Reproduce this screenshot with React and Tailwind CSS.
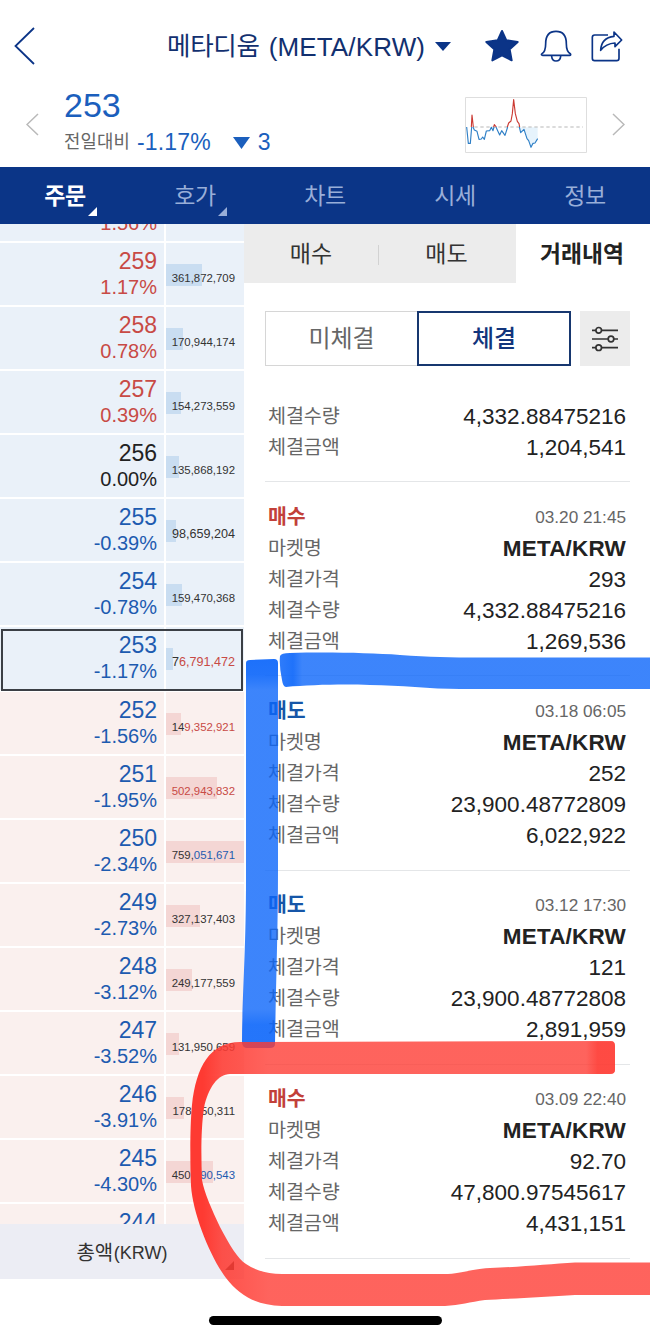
const orderBook = [
  { price: "", rate: "1.56%", dir: "up", side: "ask", amount: "", bar: 0 },
  { price: "259", rate: "1.17%", dir: "up", side: "ask", amount: "361,872,709", bar: 36 },
  { price: "258", rate: "0.78%", dir: "up", side: "ask", amount: "170,944,174", bar: 17 },
  { price: "257", rate: "0.39%", dir: "up", side: "ask", amount: "154,273,559", bar: 15 },
  { price: "256", rate: "0.00%", dir: "flat", side: "ask", amount: "135,868,192", bar: 13 },
  { price: "255", rate: "-0.39%", dir: "down", side: "ask", amount: "98,659,204", bar: 10 },
  { price: "254", rate: "-0.78%", dir: "down", side: "ask", amount: "159,470,368", bar: 16 },
  { price: "253", rate: "-1.17%", dir: "down", side: "ask", amount: "7", changed: "6,791,472", tone: "up", bar: 7, current: true },
  { price: "252", rate: "-1.56%", dir: "down", side: "bid", amount: "14", changed: "9,352,921", tone: "up", bar: 15 },
  { price: "251", rate: "-1.95%", dir: "down", side: "bid", amount: "", changed: "502,943,832", tone: "up", bar: 51 },
  { price: "250", rate: "-2.34%", dir: "down", side: "bid", amount: "759,", changed: "051,671", tone: "down", bar: 78 },
  { price: "249", rate: "-2.73%", dir: "down", side: "bid", amount: "327,137,403", bar: 34 },
  { price: "248", rate: "-3.12%", dir: "down", side: "bid", amount: "249,177,559", bar: 26 },
  { price: "247", rate: "-3.52%", dir: "down", side: "bid", amount: "131,950,659", bar: 13 },
  { price: "246", rate: "-3.91%", dir: "down", side: "bid", amount: "178,350,311", bar: 18 },
  { price: "245", rate: "-4.30%", dir: "down", side: "bid", amount: "450,3", changed: "90,543", tone: "down", bar: 47 },
  { price: "244", rate: "", dir: "down", side: "bid", amount: "", bar: 0 },
];

const trades = [
  { type: "매수", date: "03.20 21:45", price: "293", qty: "4,332.88475216", total: "1,269,536" },
  { type: "매도", date: "03.18 06:05", price: "252", qty: "23,900.48772809", total: "6,022,922" },
  { type: "매도", date: "03.12 17:30", price: "121", qty: "23,900.48772808", total: "2,891,959" },
  { type: "매수", date: "03.09 22:40", price: "92.70", qty: "47,800.97545617", total: "4,431,151" },
];

const toneClass = {
  up: "text-[#c84a45]",
  down: "text-[#1d5bb0]",
  flat: "text-[#222]",
};

function Header() {
  return (
    <header className="flex h-[92px] items-center pl-[14px] pr-[26px] text-[#0b3487]">
      <svg className="w-[22px] h-[40px]" viewBox="0 0 22 40" fill="none" stroke="currentColor" strokeWidth="1.8">
        <path d="M20 2 L1.5 20 L20 38" />
      </svg>
      <h1 className="ml-[131px] flex w-[259px] items-center whitespace-nowrap text-[26px] leading-[34px] text-[#12306f]">
        <span className="text-[25.5px] tracking-[-0.3px]">메타디움</span>
        <span className="ml-[9px] mt-px tracking-[0.15px]">(META/KRW)</span>
      </h1>
      <svg className="ml-[9px] w-[16px] h-[9px]" viewBox="0 0 16 9" fill="currentColor">
        <path d="M0 0H16L8 9Z" />
      </svg>
      <svg className="ml-[34px] w-[34px] h-[34px] shrink-0" viewBox="481 84 102 102" fill="currentColor" stroke="currentColor" strokeWidth="6" strokeLinejoin="round">
        <path d="M532 90 L545 118 L579 123 L555 145 L561 178 L532 163 L503 178 L509 145 L485 123 L519 118 Z" />
      </svg>
      <svg className="ml-[20px] w-[34px] h-[34px] shrink-0" viewBox="641 86 102 102" fill="none" stroke="currentColor" strokeWidth="5" strokeLinejoin="round" strokeLinecap="round">
        <path d="M661 130 C661 105 673 93 692 93 C711 93 723 105 723 130 C723 148 726 155 735 160 C737 163 736 165 733 165 H652 C648 165 647 162 650 160 C658 155 661 148 661 130Z" />
        <path d="M679 168 C680 178 686 182 692 182 C698 182 705 178 706 168" />
      </svg>
      <svg className="ml-[17px] w-[34px] h-[34px] shrink-0" viewBox="796 86 102 102" fill="none" stroke="currentColor" strokeWidth="5" strokeLinejoin="round">
        <path d="M850 104 H810 Q803 104 803 111 V174 Q803 181 810 181 H876 Q883 181 883 174 V145" />
        <path d="M868 95 L891 119 L871 139 V128 C850 129 838 137 828 150 C829 126 843 111 868 108 Z" />
      </svg>
    </header>
  );
}

function MiniChart() {
  return (
    <svg className="w-[122px] h-[56px]" viewBox="30 36 366 168" fill="none" strokeWidth="3.4" strokeLinejoin="round">
      <rect x="31.5" y="37.5" width="363" height="165" stroke="#dedede" strokeWidth="3" />
      <path d="M194 127 L200 143 L207 133 L228 187 L248 161 V127Z" fill="#e6f3fc" />
      <path d="M58 126 H384" stroke="#b8b8b8" strokeWidth="3.5" strokeDasharray="10 8" />
      <path
        d="M35 126 L40 175 H46 L50 126 M54 126 L58 135 L66 139 L72 163 L79 162 L83 156 L88 163 L94 138 L104 137 L109 127 L114 137 L117 126 M123 126 L128 137 L134 150 L140 137 L150 151 L158 126 M193 126 L197 143 L207 133 L216 161 L221 167 L228 187 L234 175 L240 174 L248 161"
        stroke="#2e7fc6"
      />
      <path d="M49 126 L51 90 L55 126 M116 126 L118 119 L124 126 M157 126 L161 114 L168 108 L172 86 L176 44 L181 86 L187 109 L192 116 L194 126" stroke="#cb3a33" />
    </svg>
  );
}

function Ticker() {
  return (
    <section className="flex h-[75px] items-start">
      <svg className="ml-[26px] mt-[21px] w-[13px] h-[23px]" viewBox="0 0 13 23" fill="none" stroke="#b9b9b9" strokeWidth="1.5">
        <path d="M12 1 L1 11.5 L12 22" />
      </svg>
      <div className="ml-[25px] w-[401px] text-[#1b5fbd]">
        <div className="mt-[-6px] text-[34px] leading-[38px]">253</div>
        <div className="mt-[3px] flex items-center leading-[30px]">
          <span className="w-[73px] whitespace-nowrap text-[17.8px] tracking-[0.1px] text-[#666]">전일대비</span>
          <span className="text-[23px] tracking-[0.15px]">-1.17%</span>
          <svg className="ml-[22px] mt-[2px] w-[17px] h-[12px]" viewBox="0 0 17 12" fill="currentColor">
            <path d="M0 0H17L8.5 12Z" />
          </svg>
          <span className="ml-[8px] text-[23px]">3</span>
        </div>
      </div>
      <div className="mt-[5px] h-[56px] w-[122px]">
        <MiniChart />
      </div>
      <svg className="ml-[25px] mt-[21px] w-[13px] h-[23px]" viewBox="0 0 13 23" fill="none" stroke="#b9b9b9" strokeWidth="1.5">
        <path d="M1 1 L12 11.5 L1 22" />
      </svg>
    </section>
  );
}

function MainTabs() {
  return (
    <nav className="grid h-[57px] grid-cols-5 bg-[#0b3587] text-[23px] text-[#99aed8]">
      {["주문", "호가", "차트", "시세", "정보"].map((name, i) => (
        <div key={name} className={`relative flex items-center justify-center pt-px ${i === 0 ? "font-bold text-white" : ""}`}>
          <span className="tracking-[-0.3px]">{name}</span>
          {i < 2 && (
            <svg className="absolute bottom-[8px] right-[33px] w-[9px] h-[9px]" viewBox="0 0 9 9" fill="currentColor">
              <path d="M9 0V9H0Z" />
            </svg>
          )}
        </div>
      ))}
    </nav>
  );
}

function BookRow({ row }) {
  const bg = row.side === "ask" ? "bg-[#eaf1f9]" : "bg-[#faf0ee]";
  const barBg = row.side === "ask" ? "bg-[#c9ddf1]" : "bg-[#f4d6d4]";
  // long amounts shrink so they still fit the column
  const amountLength = (row.amount + (row.changed || "")).length;
  const amountSize = amountLength > 10 ? "text-[11.4px]" : "text-[12.6px]";
  return (
    <div className="relative flex h-[64.1px] gap-[2px] border-b-2 border-white">
      <div className={`w-[164px] pr-[7px] pt-[4px] text-right ${bg} ${toneClass[row.dir]}`}>
        <div className="h-[28px] text-[23px] leading-[28px]">{row.price}</div>
        <div className="text-[20px] leading-[24px]">{row.rate}</div>
      </div>
      <div className={`w-[78px] pt-[21px] ${bg}`}>
        <div className={`h-[22px] ${barBg}`} style={{ width: row.bar }} />
        <div className={`mt-[-15px] pr-[9px] text-right leading-[14px] text-[#333] ${amountSize}`}>
          {row.amount}
          {row.changed && <span className={toneClass[row.tone]}>{row.changed}</span>}
        </div>
      </div>
      {row.current && <div className="absolute left-px top-[2px] h-[62px] w-[242px] border-2 border-[#3b3f45]" />}
    </div>
  );
}

function OrderBook() {
  return (
    <aside className="w-[244px] shrink-0">
      <div className="h-[1000px] overflow-hidden">
        <div className="mt-[-45.2px]">
          {orderBook.map((row, i) => (
            <BookRow key={i} row={row} />
          ))}
        </div>
      </div>
      <div className="relative flex h-[55px] items-center justify-center gap-px bg-[#ecedf4] text-[#333]">
        <div className="mt-[3px] text-[20px] leading-[22px] tracking-[-0.2px]">총액</div>
        <div className="mt-[3px] text-[18px] leading-[22px]">(KRW)</div>
        <svg className="absolute bottom-[9px] right-[10px] w-[9px] h-[9px]" viewBox="0 0 9 9" fill="#333">
          <path d="M9 0V9H0Z" />
        </svg>
      </div>
    </aside>
  );
}

function Line({ label, value, bold }) {
  return (
    <div className="flex h-[31.1px] items-center justify-between pl-[3px] pr-[4px]">
      <span className="text-[19.6px] tracking-[-0.1px] text-[#666]">{label}</span>
      <span className={`text-[22.5px] text-[#222] ${bold ? "font-bold tracking-[0.2px]" : ""}`}>{value}</span>
    </div>
  );
}

function Trade({ trade }) {
  const color = trade.type === "매수" ? "text-[#c2403a]" : "text-[#1656a8]";
  return (
    <div className="h-[194.1px] border-b-[1.5px] border-[#e4e6e8] pt-[19.6px]">
      <div className="flex h-[31.1px] items-center justify-between pl-[3px] pr-[4px]">
        <span className={`text-[20.5px] font-bold ${color}`}>{trade.type}</span>
        <span className="text-[17.2px] text-[#666]">{trade.date}</span>
      </div>
      <Line label="마켓명" value="META/KRW" bold />
      <Line label="체결가격" value={trade.price} />
      <Line label="체결수량" value={trade.qty} />
      <Line label="체결금액" value={trade.total} />
    </div>
  );
}

function History() {
  return (
    <main className="flex-1">
      <div className="flex h-[59px] text-[23px] text-[#333]">
        <div className="flex w-[272px] items-center bg-[#ececec] pt-[2px]">
          <div className="w-[134px] text-center">매수</div>
          <div className="h-[20px] w-px bg-[#d2d2d2]" />
          <div className="flex-1 pr-[2px] text-center">매도</div>
        </div>
        <div className="flex flex-1 items-center justify-center whitespace-nowrap pr-[2px] pt-[2px] text-[22.8px] font-bold text-[#222]">거래내역</div>
      </div>

      <div className="mt-[28px] flex pl-[21px]">
        <div className="flex h-[55px] w-[152px] items-center justify-center border-[1.5px] border-r-0 border-[#d6d6d6] text-[24px] text-[#666]">미체결</div>
        <div className="flex h-[55px] w-[154px] items-center justify-center border-2 border-[#17376f] text-[24px] font-medium text-[#12357c]">체결</div>
        <div className="ml-[9px] flex h-[55px] w-[50px] items-center justify-center bg-[#ececec]">
          <svg className="w-[26px] h-[26px]" viewBox="0 0 26 26" fill="none" stroke="#333" strokeWidth="1.7">
            <path d="M0 4.3H4M9.5 4.3H26M0 13H16M22 13H26M0 21.7H4M9.5 21.7H26" />
            <circle cx="6.7" cy="4.3" r="2.8" />
            <circle cx="19" cy="13" r="2.8" />
            <circle cx="6.7" cy="21.7" r="2.8" />
          </svg>
        </div>
      </div>

      <div className="ml-[21px] mr-[20px]">
        <div className="mt-[34px] h-[82.4px] border-b-[1.5px] border-[#e4e6e8] pt-px">
          <Line label="체결수량" value="4,332.88475216" />
          <Line label="체결금액" value="1,204,541" />
        </div>
        {trades.map((trade) => (
          <Trade key={trade.date} trade={trade} />
        ))}
      </div>
    </main>
  );
}

// Freehand highlighter strokes on top of the screen
function Marker() {
  return (
    <svg className="pointer-events-none absolute inset-0 w-[650px] h-[1338px]" viewBox="0 0 650 1338">
      <defs>
        <linearGradient id="blueAcross" gradientUnits="userSpaceOnUse" x1="280" y1="0" x2="650" y2="0">
          <stop offset="0" stopColor="#0c66fa" stopOpacity="0.86" />
          <stop offset="0.035" stopColor="#0c66fa" stopOpacity="0.92" />
          <stop offset="0.06" stopColor="#0c66fa" stopOpacity="0.8" />
          <stop offset="1" stopColor="#0c66fa" stopOpacity="0.8" />
        </linearGradient>
        <linearGradient id="blueDown" gradientUnits="userSpaceOnUse" x1="0" y1="659" x2="0" y2="1048">
          <stop offset="0" stopColor="#0c66fa" stopOpacity="0.93" />
          <stop offset="0.04" stopColor="#0c66fa" stopOpacity="0.91" />
          <stop offset="0.08" stopColor="#0c66fa" stopOpacity="0.8" />
          <stop offset="0.9" stopColor="#0c66fa" stopOpacity="0.8" />
          <stop offset="0.94" stopColor="#0c66fa" stopOpacity="0.9" />
          <stop offset="1" stopColor="#0c66fa" stopOpacity="0.9" />
        </linearGradient>
        <linearGradient id="redAcross" gradientUnits="userSpaceOnUse" x1="190" y1="0" x2="650" y2="0">
          <stop offset="0" stopColor="#fe3a32" stopOpacity="1" />
          <stop offset="0.028" stopColor="#fe3a32" stopOpacity="1" />
          <stop offset="0.07" stopColor="#fe3a32" stopOpacity="0.88" />
          <stop offset="0.17" stopColor="#fe3a32" stopOpacity="0.79" />
          <stop offset="1" stopColor="#fe3a32" stopOpacity="0.79" />
        </linearGradient>
        <linearGradient id="redEnd" gradientUnits="userSpaceOnUse" x1="586" y1="0" x2="615" y2="0">
          <stop offset="0" stopColor="#fe3a32" stopOpacity="0" />
          <stop offset="0.4" stopColor="#fe3a32" stopOpacity="0.6" />
          <stop offset="1" stopColor="#fe3a32" stopOpacity="0.6" />
        </linearGradient>
      </defs>
      <path
        fill="url(#blueAcross)"
        d="M280 656 Q281 653 290 653 C330 652 370 653 400 655 C430 657 450 657.500 480 657.500 H650 V689 H460 C430 689 400 685 370 685 C340 684 310 685 286 687 Q283 687 282 680 Q279 666 280 656Z"
      />
      <path
        fill="url(#blueDown)"
        d="M246 663 Q246 660 250 660 L274 659 Q278 659 278 663 V870 C278 930 276 980 275 1044 Q275 1048 270 1048 H246 Q242 1047 242 1042 C242 1000 246 950 246 880Z"
      />
      <path
        fill="url(#redAcross)"
        d="M611 1041 Q615 1041 615 1046 V1070 Q615 1074 610 1074 H230 C218 1074 208 1088 204 1108 C201 1128 201 1155 202 1180 C204 1192 212 1210 220 1227 C230 1246 238 1259 246 1264 C257 1271 268 1274 282 1274 H448 C465 1273 470 1269 490 1268 C520 1267 550 1264 575 1262.500 H650 V1295 H575 C545 1297 505 1299 485 1300 C470 1302 460 1305 445 1306 H282 C256 1305 240 1296 226 1278 C211 1258 193 1215 191 1186 C190 1160 190 1125 192 1105 C196 1067 210 1042 240 1042Z"
      />
      <path fill="url(#redEnd)" d="M586 1041.500 H611 Q615 1041 615 1046 V1070 Q615 1074 610 1074 H586Z" />
    </svg>
  );
}

export default function App() {
  return (
    <div className="relative h-[1338px] w-[650px] overflow-hidden bg-white font-['Liberation_Sans','Noto_Sans_CJK_KR',sans-serif]">
      <Header />
      <Ticker />
      <MainTabs />
      <div className="flex">
        <OrderBook />
        <History />
      </div>
      <div className="mx-auto mt-[37px] h-[9px] w-[233px] rounded-full bg-black" />
      <Marker />
    </div>
  );
}
